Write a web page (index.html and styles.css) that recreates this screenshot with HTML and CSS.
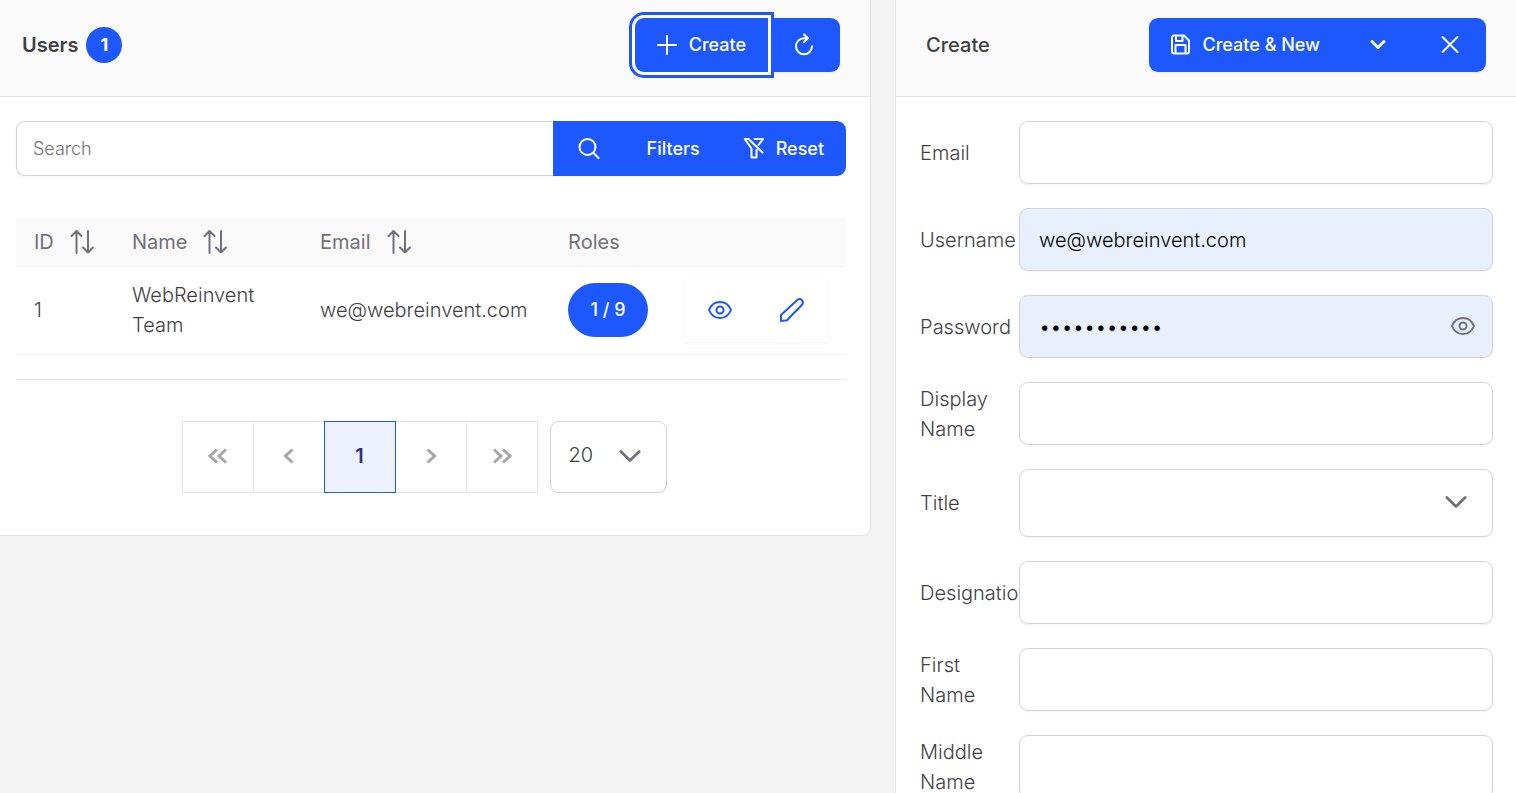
FILE: index.html
```html
<!DOCTYPE html>
<html lang="en">
<head>
<meta charset="utf-8">
<title>Users</title>
<link rel="stylesheet" href="styles.css">
</head>
<body>
<svg class="defs" aria-hidden="true">
  <symbol id="sort" viewBox="0 0 24 24"><path d="M6.500 23V1.500M1.500 6l5-5 5 5M18 1v21.500M13 17.500l5 5 5-5"/></symbol>
  <symbol id="eye" viewBox="0 0 24 24"><path d="M1 12C3 7 7 4 12 4s9 3 11 8c-2 5-6 8-11 8S3 17 1 12z"/><circle cx="12" cy="12" r="3.500"/></symbol>
  <symbol id="chevron" viewBox="0 0 24 24"><path d="M2 7l10 10L22 7"/></symbol>
</svg>
<main class="page">
  <section class="panel list-panel">
    <header class="panel-header">
      <h1 class="title">Users <span class="count">1</span></h1>
      <div class="group">
        <button class="btn focused" type="button">
          <svg class="icon" viewBox="0 0 20 20"><path d="M10 1v18M1 10h18"/></svg>Create
        </button>
        <button class="btn square" type="button" aria-label="Reload">
          <svg class="icon" viewBox="0 0 20 20"><path d="M18 11.300a8 8 0 1 1-8-8h3.500M10 -0.500l4 3.800-4 3.800"/></svg>
        </button>
      </div>
    </header>
    <div class="list-body">
      <div class="search-row">
        <input class="search" type="text" placeholder="Search" aria-label="Search">
        <button class="btn square" type="button" aria-label="Search">
          <svg class="icon search-icon" viewBox="0 0 22 22"><circle cx="9.500" cy="9" r="8"/><path d="M15.500 15l5 5"/></svg>
        </button>
        <button class="btn" type="button">Filters</button>
        <button class="btn" type="button">
          <svg class="icon" viewBox="0 0 20 20"><path d="M0.800 0l6.700 9.500V18.500h5v-7.500M0.800 0h3.700L18.500 13.500M10.500 0H19l-4.500 6"/></svg>Reset
        </button>
      </div>
      <table class="users">
        <colgroup><col class="col-id"><col class="col-name"><col class="col-email"><col class="col-roles"><col class="col-actions"></colgroup>
        <thead>
          <tr>
            <th><span class="sortable">ID <svg class="sort"><use href="#sort"/></svg></span></th>
            <th><span class="sortable">Name <svg class="sort"><use href="#sort"/></svg></span></th>
            <th><span class="sortable">Email <svg class="sort"><use href="#sort"/></svg></span></th>
            <th>Roles</th>
            <th></th>
          </tr>
        </thead>
        <tbody>
          <tr>
            <td>1</td>
            <td>WebReinvent Team</td>
            <td>we@webreinvent.com</td>
            <td><button class="pill" type="button">1 / 9</button></td>
            <td>
              <div class="actions">
                <button class="action" type="button" aria-label="View"><svg class="row-icon"><use href="#eye"/></svg></button>
                <button class="action" type="button" aria-label="Edit"><svg class="row-icon" viewBox="0 0 24 24"><path d="M1 23v-6L17 2.200a3.200 3.200 0 0 1 5 4.600L7 22.300z"/></svg></button>
              </div>
            </td>
          </tr>
        </tbody>
      </table>
      <hr class="rule">
      <nav class="pager" aria-label="Pages">
        <div class="pages">
          <button class="page-btn" type="button" disabled aria-label="First page"><svg class="arrow" viewBox="0 0 20 16"><path d="M9 1.500L2 8l7 6.500M18 1.500L11 8l7 6.500"/></svg></button>
          <button class="page-btn" type="button" disabled aria-label="Previous page"><svg class="arrow" viewBox="0 0 20 16"><path d="M13.500 1.500L6.500 8l7 6.500"/></svg></button>
          <button class="page-btn current" type="button">1</button>
          <button class="page-btn" type="button" disabled aria-label="Next page"><svg class="arrow" viewBox="0 0 20 16"><path d="M6.500 1.500l7 6.500-7 6.500"/></svg></button>
          <button class="page-btn" type="button" disabled aria-label="Last page"><svg class="arrow" viewBox="0 0 20 16"><path d="M2 1.500L9 8l-7 6.500M11 1.500L18 8l-7 6.500"/></svg></button>
        </div>
        <div class="control rows">
          <select class="field" aria-label="Rows per page"><option>20</option></select>
          <svg class="adorn"><use href="#chevron"/></svg>
        </div>
      </nav>
    </div>
  </section>

  <section class="panel form-panel">
    <header class="panel-header">
      <h2 class="title form-title">Create</h2>
      <div class="group">
        <button class="btn" type="button">
          <svg class="icon" viewBox="0 0 20 20"><path d="M3 0.500h10l5 5v11a2 2 0 0 1-2 2H3a2 2 0 0 1-2-2v-14a2 2 0 0 1 2-2zM5 0.500v5.500h6.500V0.500M4.500 18.500v-8.500h10v8.500"/></svg>Create &amp; New
        </button>
        <button class="btn square" type="button" aria-label="More actions">
          <svg class="icon small" viewBox="0 0 16 16"><path d="M2 4.500l6 6 6-6"/></svg>
        </button>
        <button class="btn square" type="button" aria-label="Close">
          <svg class="icon close" viewBox="0 0 16 16"><path d="M0.500 0l15 15M15.500 0L0.500 15"/></svg>
        </button>
      </div>
    </header>
    <form class="form">
      <div class="row"><label for="email">Email</label><input class="field" id="email" type="text"></div>
      <div class="row"><label for="username">Username</label><input class="field filled" id="username" type="text" value="we@webreinvent.com"></div>
      <div class="row"><label for="password">Password</label>
        <div class="control"><input class="field filled" id="password" type="password" value="secretpass1"><svg class="adorn eye"><use href="#eye"/></svg></div>
      </div>
      <div class="row"><label for="display">Display Name</label><input class="field" id="display" type="text"></div>
      <div class="row"><label for="title">Title</label>
        <div class="control tall"><select class="field" id="title"><option></option></select><svg class="adorn"><use href="#chevron"/></svg></div>
      </div>
      <div class="row"><label for="designation">Designation</label><input class="field" id="designation" type="text"></div>
      <div class="row"><label for="first">First Name</label><input class="field" id="first" type="text"></div>
      <div class="row"><label for="middle">Middle Name</label><input class="field" id="middle" type="text"></div>
    </form>
  </section>
</main>
</body>
</html>
```

FILE: styles.css
```css
:root {
  --blue: #1d58ff;
  --text: #3f3f46;
  --muted: #71717a;
  --border: #d4d4d8;
  --line: #e4e4e7;
}

* { box-sizing: border-box; }

body {
  margin: 0;
  background: #f3f3f3;
  color: var(--text);
  font-family: Inter, "Liberation Sans", sans-serif;
  font-size: 20px;
  font-weight: 300;
  line-height: 30px;
}

button, input, select { font: inherit; color: inherit; margin: 0; }
button { border: 0; padding: 0; background: none; }

svg {
  display: block;
  flex: none;
  fill: none;
  stroke: currentColor;
  stroke-width: 2;
  stroke-linecap: round;
  stroke-linejoin: round;
  overflow: visible;
}

.defs { position: absolute; width: 0; height: 0; }

.page {
  display: grid;
  grid-template-columns: 57.46% minmax(0, 1fr);
  gap: 24px;
  align-items: start;
  height: 100vh;
  overflow: hidden;
}

.panel { min-width: 0; background: #fff; border: 0 solid var(--line); }
.list-panel { border-width: 0 1px 1px 0; border-radius: 0 0 8px 0; }
.form-panel { border-left-width: 1px; }

.panel-header {
  display: flex;
  align-items: center;
  justify-content: space-between;
  padding: 18px 30px 24px;
  background: #fafafa;
  border-bottom: 1px solid var(--line);
}

.list-panel .panel-header { padding-left: 22px; }

.title {
  display: flex;
  align-items: center;
  gap: 8px;
  margin: 0;
  font-size: 20px;
  font-weight: 600;
}

.form-title { font-weight: 500; }

.count {
  width: 36px;
  border-radius: 18px;
  background: var(--blue);
  color: #fff;
  font-size: 18px;
  font-weight: 700;
  line-height: 36px;
  text-align: center;
}

.group { display: flex; border-radius: 9px; box-shadow: 0 1px 3px #0000000d; }

.btn {
  display: flex;
  align-items: center;
  justify-content: center;
  gap: 12px;
  min-height: 54px;
  padding: 0 22px;
  background: var(--blue);
  color: #fff;
  font-size: 18px;
  font-weight: 500;
}

.btn.square { width: 72px; padding: 0; }
.group .btn:first-child { border-radius: 9px 0 0 9px; }
.group .btn:last-child, .search-row .btn:last-child { border-radius: 0 9px 9px 0; }

.focused {
  position: relative;
  outline: 3px solid var(--blue);
  outline-offset: 3px;
  box-shadow: 0 0 0 3px #fff;
}

.icon { width: 20px; height: 20px; }
.search-icon { width: 22px; height: 22px; }
.icon.small { width: 16px; height: 16px; stroke-width: 3; }
.icon.close { width: 16px; height: 16px; }

.list-body { padding: 24px 24px 42px 16px; }

.search-row { display: flex; box-shadow: 0 1px 3px #0000000d; border-radius: 9px; }

.search {
  flex: 1;
  min-width: 0;
  height: 55px;
  padding: 0 16px;
  border: 1px solid var(--border);
  border-right: 0;
  border-radius: 9px 0 0 9px;
  font-size: 18px;
}

.search::placeholder { color: var(--muted); opacity: 1; }

.users {
  width: 100%;
  margin-top: 42px;
  table-layout: fixed;
  border-collapse: separate;
  border-spacing: 0;
}

.col-id { width: 98px; }
.col-email { width: 248px; }
.col-roles { width: 116px; }
.col-actions { width: 180px; }

th {
  padding: 9px 18px;
  background: #fafafa;
  border-bottom: 1px solid #f1f1f3;
  color: var(--muted);
  font-weight: 400;
  text-align: left;
}

td { padding: 10px 18px 12px; border-bottom: 1px solid #f1f1f3; }

.sortable { display: flex; align-items: center; gap: 16px; }
.sort { width: 24px; height: 24px; }

.pill {
  display: block;
  width: 80px;
  height: 54px;
  border-radius: 27px;
  background: var(--blue);
  color: #fff;
  font-size: 18px;
  font-weight: 500;
}

.actions { display: flex; width: 144px; box-shadow: 0 1px 3px #00000012; }
.action { display: grid; place-items: center; flex: 1; height: 65px; color: var(--blue); }
.row-icon { width: 24px; height: 24px; }

.rule { margin: 24px 0 41px; border: 0; border-top: 1px solid var(--line); }

.pager { display: flex; justify-content: center; gap: 12px; padding-right: 14px; }
.pages { display: flex; }

.page-btn {
  display: grid;
  place-items: center;
  width: 72px;
  height: 72px;
  padding-bottom: 2px;
  border: 1px solid var(--line);
  color: #a6a6ad;
}

.page-btn + .page-btn { margin-left: -1px; }

.page-btn.current {
  position: relative;
  border-color: var(--blue);
  background: #eef2ff;
  color: #312e81;
  font-weight: 600;
}

.arrow { width: 20px; height: 16px; stroke-width: 3; stroke-linecap: butt; stroke-linejoin: miter; }

.form { padding: 24px 23px 24px 24px; }
.row { display: grid; grid-template-columns: 99px 1fr; align-items: center; margin-bottom: 24px; }

.field {
  display: block;
  width: 100%;
  min-width: 0;
  height: 63px;
  padding: 0 19px;
  border: 1px solid var(--border);
  border-radius: 9px;
  background: #fff;
  box-shadow: 0 1px 3px #0000000d;
  appearance: none;
}

.field.filled { background: #e8f0fe; color: #000; }

.control { position: relative; }
.tall .field { height: 68px; }
.rows { width: 117px; }
.rows .field { height: 72px; padding: 0 18px 4px; }

.adorn {
  position: absolute;
  top: 50%;
  right: 26px;
  width: 22px;
  height: 22px;
  margin-top: -12px;
  color: var(--muted);
  stroke-width: 3;
  pointer-events: none;
}

.adorn.eye { right: 18px; width: 24px; height: 24px; margin-top: -13px; stroke-width: 2; }
```
